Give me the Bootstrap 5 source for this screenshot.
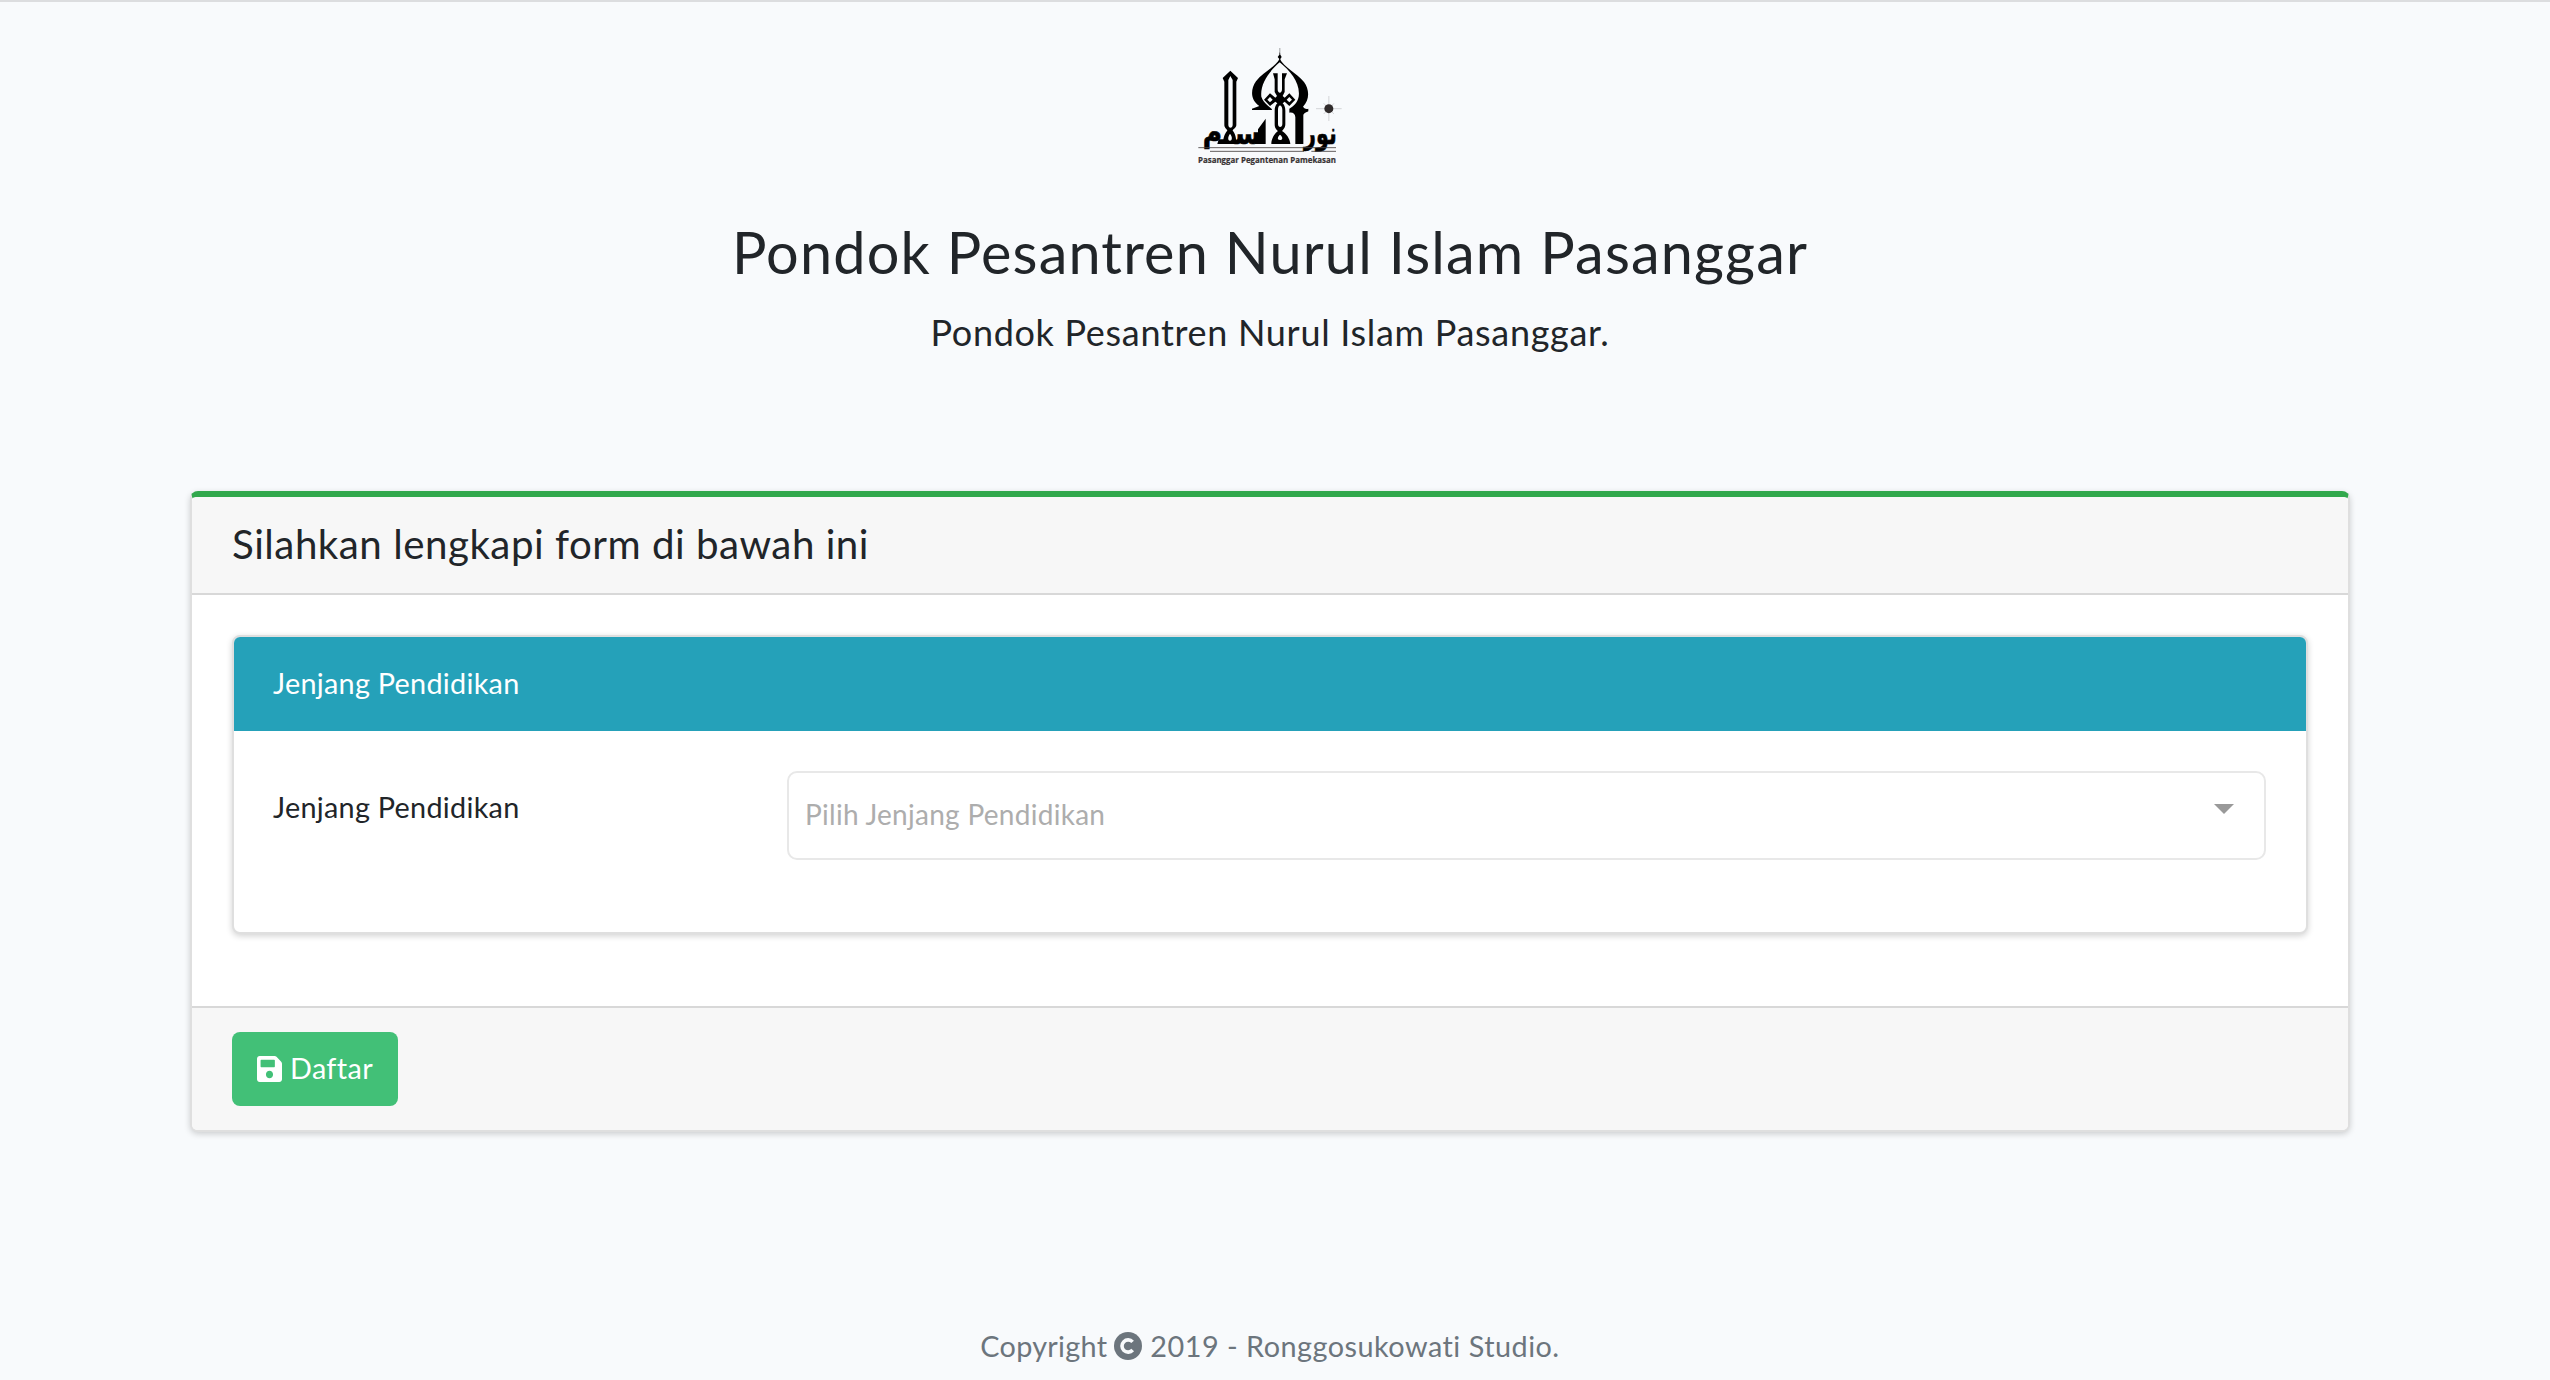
<!DOCTYPE html>
<html lang="id">
<head>
<meta charset="utf-8">
<meta name="viewport" content="width=device-width, initial-scale=1">
<title>Pondok Pesantren Nurul Islam Pasanggar</title>
<link href="https://cdn.jsdelivr.net/npm/bootstrap@5.3.0/dist/css/bootstrap.min.css" rel="stylesheet">
<style>
body{background:#f8fafc;color:#212529;font-family:Lato,"Open Sans",sans-serif;font-size:28.8px;line-height:46px;letter-spacing:.28px;border-top:2px solid #dcdddf;height:1380px;overflow:hidden;padding-right:10px}
.brand-logo{display:block;width:180px;height:150px}
.page-head{padding-top:28px;height:489px}
.page-title{font-size:57.6px;line-height:70px;font-weight:400;letter-spacing:1.16px;margin:37px 0 0}
.page-sub{font-size:36px;line-height:58px;letter-spacing:.69px;margin:16px 0 0}
.panel{border:2px solid #dfdfdf;border-radius:8px;box-shadow:0 2px 6px rgba(0,0,0,.18)}
.panel-main{width:2160px;height:641px;border-top:6px solid #31a84c}
.panel-main>.card-header,.panel-main>.card-footer{background:#f7f7f7;border-color:#d8d8d8}
.panel-main>.card-header{height:98px;padding:0 40px 3px;border-bottom-width:2px;font-size:40.3px;letter-spacing:.5px}
.panel-main>.card-body{padding:40px}
.panel-main>.card-footer{height:124px;padding:24px 40px;border-top-width:2px}
.panel-sub{height:299px}
.panel-sub>.card-header{height:94px;background:#25a1b9;padding:0 39px 2px;border:0;border-radius:6px 6px 0 0}
.panel-sub>.card-body{padding:40px 40px 40px 39px}
.field-label{width:514px;padding-top:13px}
.pick{height:89px;border:2px solid #e8e8e8;border-radius:10px;padding:0 30px 3px 16px;color:#adadad;font-size:28px}
.caret{width:0;height:0;border:10px solid transparent;border-top-color:#999;border-bottom:0;margin-bottom:10px}
.btn-save,.btn-save:hover{width:166px;height:74px;background:#42c077;color:#fff;border:0;border-radius:8px;font-size:28.8px;letter-spacing:.35px;padding:0 0 1px;gap:8px}
.ico-save{width:25px;height:26px}
.page-foot{color:#6c757d;padding-top:191px}
.ico-copy{width:28px;height:28px;margin:0 8px 0 7px}
.foot-owner{letter-spacing:.5px}
</style>
<script src="https://cdn.jsdelivr.net/npm/bootstrap@5.3.0/dist/js/bootstrap.bundle.min.js"></script>
</head>
<body>
<header class="page-head d-flex flex-column align-items-center">
<svg class="brand-logo" viewBox="0 0 540 450" role="img" aria-label="Nurul Islam">
<!-- spire and dome -->
<path d="M299.500 54V72" stroke="#8d8e90" stroke-width="2.500"/>
<path d="M299.500 66L301 74 305 81 301 87V92H298V87L293 81 298 74z"/>
<path fill-rule="evenodd" d="M299 86C286 112 248 126 228 154C210 180 212 212 238 228L216 236V240H276C276 232 250 222 244 200C240 160 268 124 299 97C332 124 362 160 356 200C352 220 340 228 328 236V248C338 246 346 252 346 262V342H370V256C372 248 378 248 385 244V236C378 238 374 236 369 230C390 208 388 178 372 156C350 128 312 112 299 86Z"/>
<!-- left minaret -->
<path fill-rule="evenodd" d="M151 122L174 144L169 155V285C169 294 160 296 158 302C166 310 170 326 168 342H130C128 326 134 310 142 302C140 296 133 294 133 285V155L128 144ZM151 138L145 150V284C145 296 158 296 158 284V150ZM150 312C144 318 142 332 150 332C158 332 157 318 150 312Z"/>
<!-- centre cross and pillar -->
<path fill-rule="evenodd" d="M279 130H293V178C293 192 306 192 306 178V130H321L314 148V186L308 198L314 203L328 190L346 209L328 228L314 215L308 220C314 226 316 234 316 242V282C316 294 310 298 306 303C318 310 330 326 331 342H274C274 326 284 310 294 303C288 298 284 294 284 282V242C284 234 286 226 292 220L286 215L270 228L252 209L270 190L286 203L291 198L284 186V148ZM270 201L262 209L270 217L278 209ZM328 201L320 209L328 217L336 209ZM300 226C296 228 294 232 294 240V282C294 294 307 294 307 282V240C307 232 304 228 300 226ZM300 314C293 319 290 330 300 330C310 330 308 319 300 314Z"/>
<!-- tall finial beside the pillar -->
<path d="M257 266V342H224V330L234 322V298Z"/>
<g font-family="'DejaVu Sans',sans-serif" font-weight="700" fill="#000" stroke="#000" stroke-width="2">
<text x="164" y="341" font-size="92" textLength="78" lengthAdjust="spacingAndGlyphs">&#x0633;&#x200D;</text>
<text x="68" y="336" font-size="86" textLength="58" lengthAdjust="spacingAndGlyphs">&#x0645;</text>
<text x="372" y="342" font-size="92" textLength="98" lengthAdjust="spacingAndGlyphs">&#x0646;&#x0648;&#x0631;</text>
</g>
<path d="M116 328H134V342H112Z"/>
<path stroke="#4a4646" stroke-width="2.600" d="M55 353H468M90 364H372M394 364H468"/>
<!-- star -->
<path stroke="#c3c3c5" stroke-width="2" d="M408 236H485M446.500 198V273M431 220L462 252M462 220L431 252"/>
<circle cx="446.500" cy="236" r="13.500" fill="#302b2b"/>
<text x="54" y="398" font-family="'Open Sans',sans-serif" font-size="25" font-weight="700" fill="#383334" stroke="#383334" stroke-width=".6" letter-spacing="0" textLength="414" lengthAdjust="spacingAndGlyphs">Pasanggar Pegantenan Pamekasan</text>
</svg>
<h1 class="page-title">Pondok Pesantren Nurul Islam Pasanggar</h1>
<p class="page-sub">Pondok Pesantren Nurul Islam Pasanggar.</p>
</header>
<main class="d-flex flex-column align-items-center">
<section class="card panel panel-main">
<div class="card-header d-flex align-items-center">Silahkan lengkapi form di bawah ini</div>
<div class="card-body">
<div class="card panel panel-sub">
<div class="card-header text-white d-flex align-items-center">Jenjang Pendidikan</div>
<div class="card-body d-flex align-items-start">
<label class="field-label">Jenjang Pendidikan</label>
<div class="pick flex-grow-1 d-flex align-items-center justify-content-between" role="combobox"><span>Pilih Jenjang Pendidikan</span><span class="caret"></span></div>
</div>
</div>
</div>
<div class="card-footer">
<button type="button" class="btn btn-save d-inline-flex align-items-center justify-content-center">
<svg class="ico-save" viewBox="0 32 448 448" preserveAspectRatio="none" fill="currentColor" aria-hidden="true"><path d="M433.941 129.941l-83.882-83.882A48 48 0 0 0 316.118 32H48C21.490 32 0 53.490 0 80v352c0 26.510 21.490 48 48 48h352c26.510 0 48-21.490 48-48V163.882a48 48 0 0 0-14.059-33.941zM224 416c-35.346 0-64-28.654-64-64s28.654-64 64-64 64 28.654 64 64-28.654 64-64 64zm96-304.520V212c0 6.627-5.373 12-12 12H76c-6.627 0-12-5.373-12-12V108c0-6.627 5.373-12 12-12h228.520c3.183 0 6.235 1.264 8.485 3.515l3.480 3.480A11.996 11.996 0 0 1 320 111.480z"/></svg>
<span>Daftar</span></button>
</div>
</section>
</main>
<footer class="page-foot d-flex justify-content-center align-items-center"><span>Copyright</span>
<svg class="ico-copy" viewBox="0 0 28 28" aria-hidden="true"><circle cx="14" cy="14" r="14" fill="currentColor"/><path d="M18.600 9.900A6.100 6.100 0 1 0 18.700 18" fill="none" stroke="#f8fafc" stroke-width="3.600"/></svg>
<span class="foot-owner">2019 - Ronggosukowati Studio.</span></footer>
</body>
</html>
